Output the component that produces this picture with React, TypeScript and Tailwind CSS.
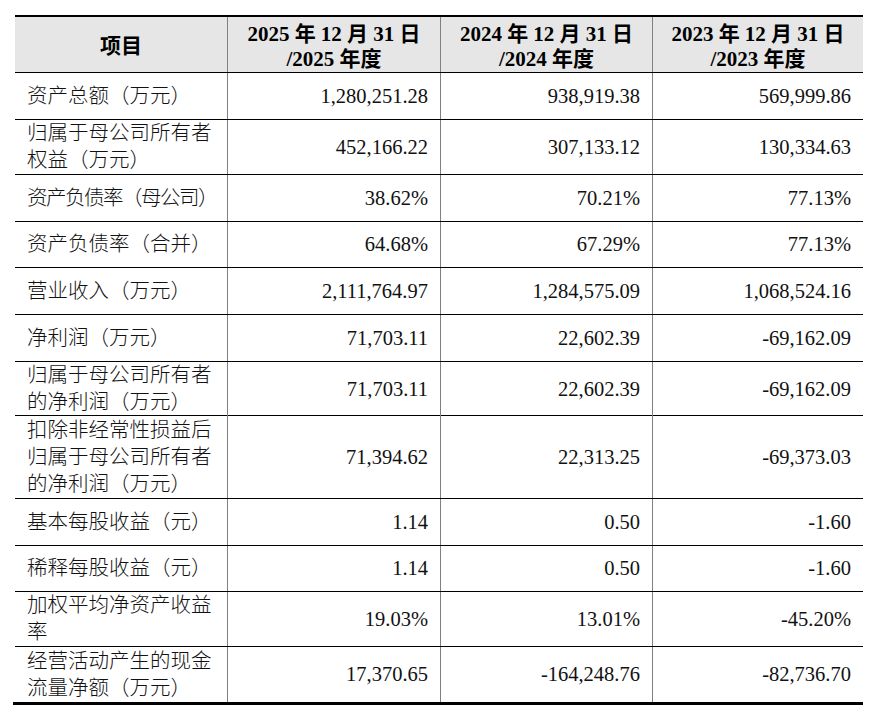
import React from "react";

type Row = { label: string[]; v: [string, string, string]; h: string; tight?: boolean };

const rows: Row[] = [
  { label: ["资产总额（万元）"], v: ["1,280,251.28", "938,919.38", "569,999.86"], h: "h-[47px]" },
  { label: ["归属于母公司所有者", "权益（万元）"], v: ["452,166.22", "307,133.12", "130,334.63"], h: "h-[55px]" },
  { label: ["资产负债率（母公司）"], v: ["38.62%", "70.21%", "77.13%"], h: "h-[47px]", tight: true },
  { label: ["资产负债率（合并）"], v: ["64.68%", "67.29%", "77.13%"], h: "h-[46px]" },
  { label: ["营业收入（万元）"], v: ["2,111,764.97", "1,284,575.09", "1,068,524.16"], h: "h-[47px]" },
  { label: ["净利润（万元）"], v: ["71,703.11", "22,602.39", "-69,162.09"], h: "h-[47px]" },
  { label: ["归属于母公司所有者", "的净利润（万元）"], v: ["71,703.11", "22,602.39", "-69,162.09"], h: "h-[54px]" },
  { label: ["扣除非经常性损益后", "归属于母公司所有者", "的净利润（万元）"], v: ["71,394.62", "22,313.25", "-69,373.03"], h: "h-[83px]" },
  { label: ["基本每股收益（元）"], v: ["1.14", "0.50", "-1.60"], h: "h-[47px]" },
  { label: ["稀释每股收益（元）"], v: ["1.14", "0.50", "-1.60"], h: "h-[46px]" },
  { label: ["加权平均净资产收益", "率"], v: ["19.03%", "13.01%", "-45.20%"], h: "h-[55px]" },
  { label: ["经营活动产生的现金", "流量净额（万元）"], v: ["17,370.65", "-164,248.76", "-82,736.70"], h: "h-[55px]" },
];

const font = { fontFamily: '"Liberation Serif", "Noto Sans CJK SC", serif' };

export default function App() {
  return (
    <div className="w-[878px] h-[714px] bg-white text-black" style={font}>
      <div className="pt-[15px] pl-[15px]">
        <div className="w-[848px] border-t-2 border-black">
          <div className="grid grid-cols-[212px_213px_212px_211px] h-[56px] bg-[#e6e6e6] border-b border-black font-bold text-[21px] leading-[25px]">
            <div className="flex items-center justify-center pt-[3px]">项目</div>
            {["2025", "2024", "2023"].map((y) => (
              <div key={y} className="flex flex-col items-center justify-center border-l border-[#808080] pt-[4px]">
                <div>{y} 年 12 月 31 日</div>
                <div>/{y} 年度</div>
              </div>
            ))}
          </div>
          {rows.map((r, i) => (
            <div
              key={i}
              className={`grid grid-cols-[212px_213px_212px_211px] ${r.h} ${i === rows.length - 1 ? "" : "border-b border-black"} text-[20.5px] leading-[27px] text-[#111]`}
            >
              <div className={`flex flex-col justify-center pl-[12px] font-light ${r.tight ? "tracking-[-1.5px]" : ""}`}>
                {r.label.map((l, j) => (
                  <div key={j} className="whitespace-nowrap">{l}</div>
                ))}
              </div>
              {r.v.map((v, j) => (
                <div key={j} className="flex items-center justify-end pr-[12px] border-l border-[#808080]">
                  {v}
                </div>
              ))}
            </div>
          ))}
        </div>
        <div className="-ml-[2px] w-[850px] h-[3px] bg-black" />
      </div>
    </div>
  );
}
